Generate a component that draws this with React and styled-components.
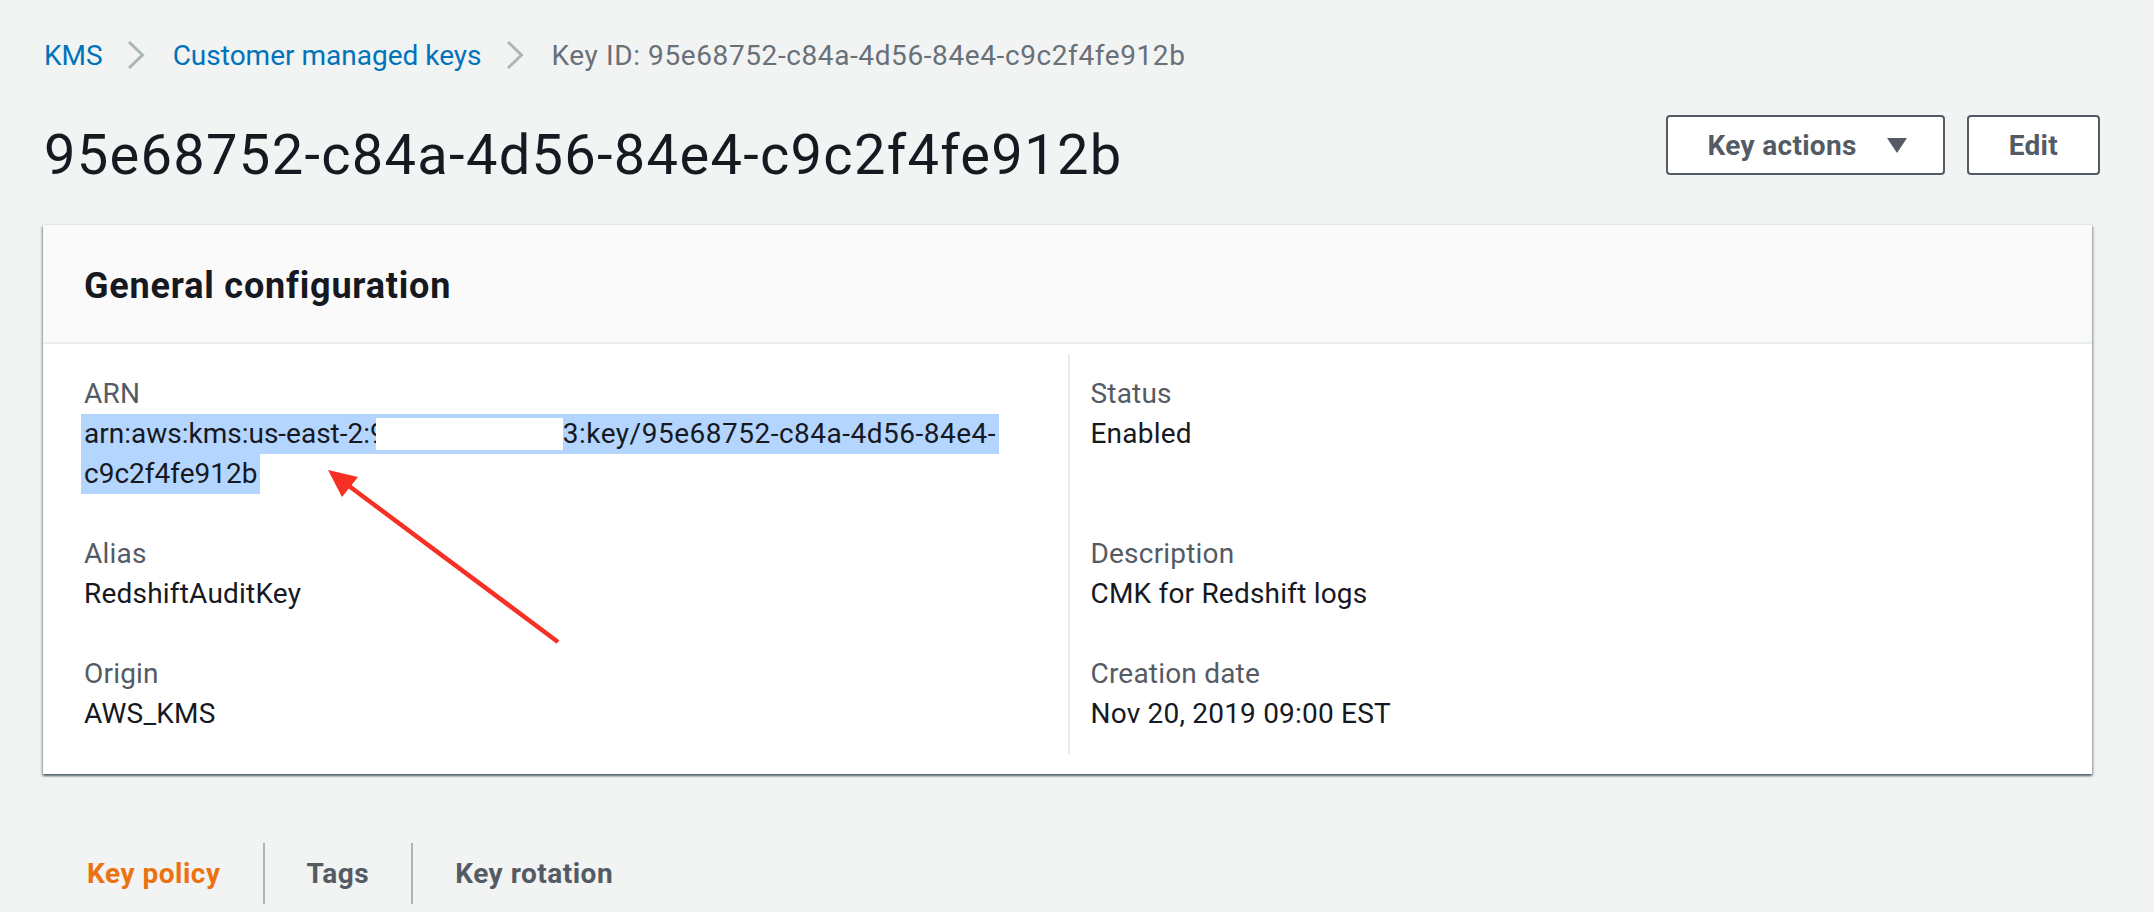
import styled, { createGlobalStyle } from "styled-components";

const GlobalStyle = createGlobalStyle`
  html, body {
    margin: 0;
    padding: 0;
    background: #f2f3f3;
    font-family: Roboto, "Liberation Sans", sans-serif;
    color: #16191f;
  }
  * { box-sizing: border-box; }
`;

const Page = styled.div`
  min-height: 912px;
  padding: 35px 54px 0 44px;
  overflow: hidden;
`;

const Breadcrumbs = styled.nav`
  display: flex;
  align-items: center;
  height: 40px;
  font-size: 28px;
`;

const Crumb = styled.span`
  color: ${(p) => (p.$current ? "#687078" : "#0073bb")};
  letter-spacing: ${(p) => (p.$current ? "0.6px" : "0")};
  white-space: nowrap;
`;

const ChevronWrap = styled.span`
  display: flex;
  margin: 0 28px 0 24px;
`;

const HeaderRow = styled.div`
  display: flex;
  justify-content: space-between;
  align-items: flex-start;
  margin-top: 40px;
`;

const Title = styled.h1`
  margin: 8px 0 0;
  font-size: 56px;
  line-height: 64px;
  font-weight: 400;
  letter-spacing: 1.3px;
  color: #16191f;
`;

const Actions = styled.div`
  display: flex;
  gap: 22px;
`;

const Button = styled.button`
  display: flex;
  align-items: center;
  gap: 30px;
  height: 60px;
  padding: 0 ${(p) => (p.$menu ? "36px" : "40px")} 0 40px;
  background: #fff;
  border: 2px solid #545b64;
  border-radius: 4px;
  font-family: inherit;
  font-size: 28px;
  font-weight: 700;
  letter-spacing: 0.3px;
  color: #545b64;
`;

const Card = styled.section`
  position: relative;
  margin: 38px 8px 0 -1px;
  background: #fff;
  box-shadow: 0 2px 2px 0 rgba(0, 28, 36, 0.5),
    2px 2px 2px 0 rgba(0, 28, 36, 0.15), -2px 2px 2px 0 rgba(0, 28, 36, 0.15),
    0 0 0 1px rgba(0, 28, 36, 0.06);
`;

const CardHeader = styled.div`
  display: flex;
  align-items: center;
  height: 119px;
  padding: 4px 41px 0;
  background: #fafafa;
  border-bottom: 2px solid #eaeded;
`;

const CardTitle = styled.h2`
  margin: 0;
  font-size: 36px;
  font-weight: 700;
  letter-spacing: 0.8px;
  color: #16191f;
`;

const CardBody = styled.div`
  display: grid;
  grid-template-columns: 1fr 1fr;
  grid-template-rows: auto auto auto;
  grid-auto-flow: column;
  padding: 10px 0 20px;
`;

const Field = styled.div`
  padding: ${(p) => (p.$first ? "20px" : "0")} 20px
    ${(p) => (p.$last ? "20px" : "40px")} ${(p) => (p.$right ? "21px" : "41px")};
  border-left: ${(p) => (p.$right ? "2px solid #eaeded" : "none")};
  font-size: 28px;
  line-height: 40px;
  letter-spacing: 0.2px;
`;

const Label = styled.div`
  color: #545b64;
`;

const Value = styled.div`
  color: #16191f;
`;

const Selected = styled.span`
  display: inline-block;
  height: 40px;
  margin-left: -3px;
  padding: 0 3px;
  background: #b4d5fe;
  white-space: nowrap;
  letter-spacing: 0;
`;

const Spread = styled.span`
  letter-spacing: 0.5px;
`;

const Redacted = styled.span`
  display: inline-block;
  width: 187px;
  height: 32px;
  margin-left: -10px;
  vertical-align: -7px;
  background: #fff;
`;

const Arrow = styled.svg`
  position: absolute;
  left: 270px;
  top: 230px;
  pointer-events: none;
`;

const Tabs = styled.div`
  display: flex;
  margin-top: 69px;
`;

const Tab = styled.div`
  display: flex;
  align-items: center;
  height: 61px;
  padding: 0 42px 0 ${(p) => (p.$first ? "43px" : "42px")};
  border-left: ${(p) => (p.$first ? "none" : "2px solid #aab7b8")};
  font-size: 28px;
  font-weight: 700;
  letter-spacing: 0.5px;
  color: ${(p) => (p.$active ? "#ec7211" : "#545b64")};
`;

const Chevron = () => (
  <ChevronWrap>
    <svg width="18" height="30" viewBox="0 0 18 30">
      <path d="M2 2 L15.5 15 L2 28" fill="none" stroke="#aab7b8" strokeWidth="3" />
    </svg>
  </ChevronWrap>
);

const CaretDown = () => (
  <svg width="20" height="15" viewBox="0 0 20 15">
    <path d="M0 0 H20 L10 15 Z" fill="#545b64" />
  </svg>
);

const keyId = "95e68752-c84a-4d56-84e4-c9c2f4fe912b";

export default function App() {
  return (
    <>
      <GlobalStyle />
      <Page>
        <Breadcrumbs>
          <Crumb>KMS</Crumb>
          <Chevron />
          <Crumb>Customer managed keys</Crumb>
          <Chevron />
          <Crumb $current>Key ID: {keyId}</Crumb>
        </Breadcrumbs>

        <HeaderRow>
          <Title>{keyId}</Title>
          <Actions>
            <Button $menu>
              Key actions
              <CaretDown />
            </Button>
            <Button>Edit</Button>
          </Actions>
        </HeaderRow>

        <Card>
          <CardHeader>
            <CardTitle>General configuration</CardTitle>
          </CardHeader>
          <CardBody>
            <Field $first>
              <Label>ARN</Label>
              <Value>
                <Selected>
                  arn:aws:kms:us-east-2:9
                  <Redacted />
                  <Spread>3:key/95e68752-c84a-4d56-84e4-</Spread>
                </Selected>
                <br />
                <Selected>c9c2f4fe912b</Selected>
              </Value>
            </Field>
            <Field>
              <Label>Alias</Label>
              <Value>RedshiftAuditKey</Value>
            </Field>
            <Field $last>
              <Label>Origin</Label>
              <Value>AWS_KMS</Value>
            </Field>
            <Field $right $first>
              <Label>Status</Label>
              <Value>Enabled</Value>
            </Field>
            <Field $right>
              <Label>Description</Label>
              <Value>CMK for Redshift logs</Value>
            </Field>
            <Field $right $last>
              <Label>Creation date</Label>
              <Value>Nov 20, 2019 09:00 EST</Value>
            </Field>
          </CardBody>
          <Arrow width="300" height="210" viewBox="0 0 300 210">
            <line x1="245" y1="187" x2="36" y2="31" stroke="#f73024" strokeWidth="4.5" />
            <path d="M15 15 L45 22 L29 42 Z" fill="#f73024" />
          </Arrow>
        </Card>

        <Tabs>
          <Tab $first $active>Key policy</Tab>
          <Tab>Tags</Tab>
          <Tab>Key rotation</Tab>
        </Tabs>
      </Page>
    </>
  );
}
